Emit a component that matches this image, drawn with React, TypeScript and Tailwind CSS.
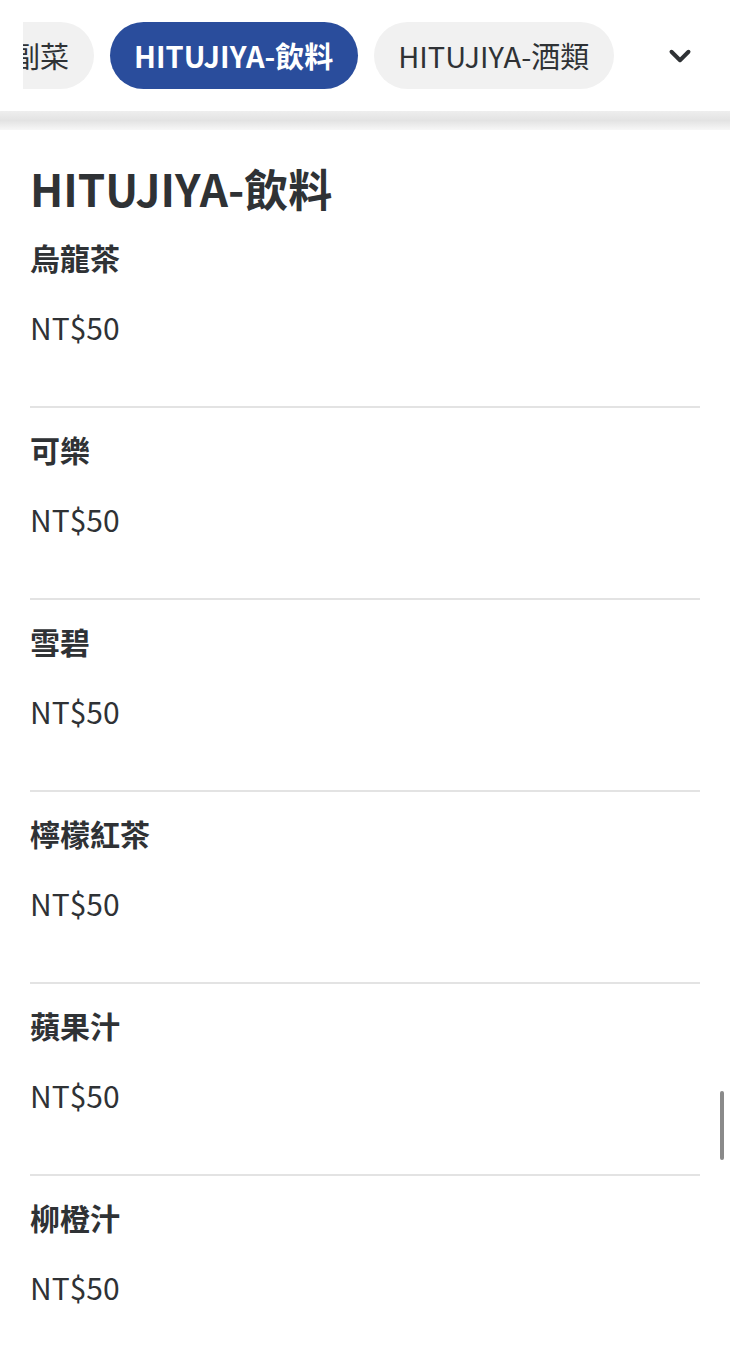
import React from 'react';
import { ChevronDown } from 'lucide-react';

const FONT = { fontFamily: '"Noto Sans CJK TC", "Noto Sans", sans-serif' };

const tabs = [
  { name: 'HITUJIYA-副菜', active: false },
  { name: 'HITUJIYA-飲料', active: true },
  { name: 'HITUJIYA-酒類', active: false },
];

const drinks = ['烏龍茶', '可樂', '雪碧', '檸檬紅茶', '蘋果汁', '柳橙汁'];

const App: React.FC = () => {
  return (
    <div className="relative min-h-[1347px] w-full overflow-hidden bg-white text-[#2f3235]" style={FONT}>
      {/* Category tabs */}
      <div className="flex h-[111px] items-center bg-white pl-[23px]">
        <div className="flex-1 overflow-hidden">
          <div className="flex gap-[16px] ml-[-169px]">
            {tabs.map((t) => (
              <div
                key={t.name}
                className={`flex h-[67px] shrink-0 items-center whitespace-nowrap rounded-full pl-6 pr-[25px] text-[29px] leading-none ${
                  t.active ? 'bg-[#2a4d9c] font-bold text-white' : 'bg-[#f1f1f1] text-[#2f3235]'
                }`}
              >
                {t.name}
              </div>
            ))}
          </div>
        </div>
        <div className="flex w-[100px] shrink-0 items-center justify-center">
          <ChevronDown size={34} strokeWidth={2.8} className="text-[#2f3235]" />
        </div>
      </div>
      <div className="h-[19px] bg-gradient-to-b from-[#eeeeee] via-[#e3e3e3] to-[#f7f7f7]" />

      {/* Section */}
      <div className="px-[30px] pt-[32px]">
        <h2 className="mb-[2px] text-[44px] font-bold leading-[52px]">HITUJIYA-飲料</h2>
        {drinks.map((d, i) => (
          <div key={d} className={i < drinks.length - 1 ? 'border-b-2 border-[#e3e3e3]' : ''}>
            <div className="pt-[21px] text-[30px] font-bold leading-[40px]">{d}</div>
            <div className="pt-[30px] pb-[59px] text-[30px] leading-[40px]">NT$50</div>
          </div>
        ))}
      </div>

      {/* scrollbar thumb */}
      <div className="absolute right-[6px] top-[1091px] h-[69px] w-[4px] rounded-full bg-[#8a8a8a]" />
    </div>
  );
};

export default App;
